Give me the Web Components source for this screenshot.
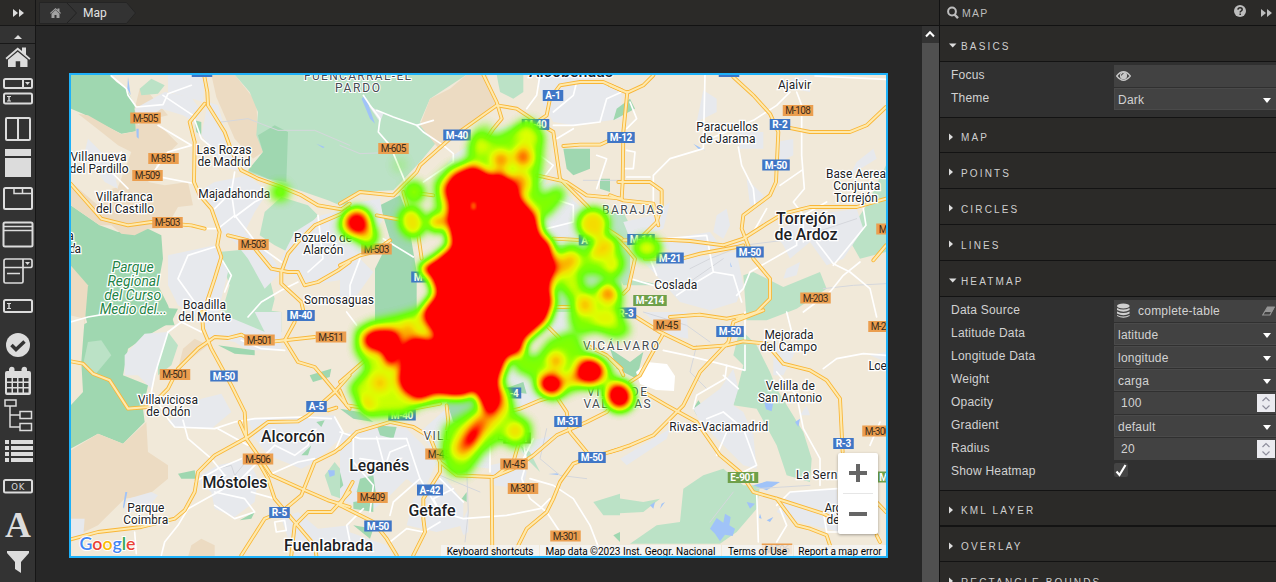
<!DOCTYPE html>
<html lang="en">
<head>
<meta charset="utf-8">
<title>Map editor</title>
<style>
html,body{margin:0;height:100%;overflow:hidden;background:#272727;font-family:"Liberation Sans",Arial,sans-serif}
</style>
</head>
<body>
<map-studio></map-studio>
<script>
class Base extends HTMLElement{
  constructor(){super();this.attachShadow({mode:'open'});}
  connectedCallback(){this.shadowRoot.innerHTML=this.view();}
}
const a=(el,n)=>el.getAttribute(n)||'';

/* ---------- shell ---------- */
customElements.define('map-studio',class extends Base{view(){return `
<style>
:host{display:grid;grid-template-columns:36px 903px 337px;width:1276px;height:582px;overflow:hidden;background:#272727}
main{display:grid;grid-template-rows:26px 1fr;min-height:0}
.work{display:grid;grid-template-columns:886px 17px;min-height:0}
.canvas{padding:47px 34px 0 33px;overflow:hidden}
</style>
<tool-rail></tool-rail>
<main><crumb-bar label="Map"></crumb-bar>
<div class="work"><div class="canvas"><heat-map></heat-map></div><scroll-track></scroll-track></div></main>
<property-panel>
 <property-section name="BASICS" open style="--h:36px;--b:56px">
  <property-row label="Focus" kind="eye"></property-row>
  <property-row label="Theme" kind="select" value="Dark"></property-row>
 </property-section>
 <property-section name="MAP" style="--h:35px"></property-section>
 <property-section name="POINTS"></property-section>
 <property-section name="CIRCLES"></property-section>
 <property-section name="LINES"></property-section>
 <property-section name="HEATMAP" open style="--b:194px">
  <property-row label="Data Source" kind="source" value="complete-table"></property-row>
  <property-row label="Latitude Data" kind="select" value="latitude"></property-row>
  <property-row label="Longitude Data" kind="select" value="longitude"></property-row>
  <property-row label="Weight" kind="select" value="carga"></property-row>
  <property-row label="Opacity" kind="number" value="100"></property-row>
  <property-row label="Gradient" kind="select" value="default"></property-row>
  <property-row label="Radius" kind="number" value="20"></property-row>
  <property-row label="Show Heatmap" kind="check"></property-row>
 </property-section>
 <property-section name="KML LAYER" style="--line:2px"></property-section>
 <property-section name="OVERLAY" style="--h:35px"></property-section>
 <property-section name="RECTANGLE BOUNDS"></property-section>
</property-panel>`}});

/* ---------- left rail; every icon is drawn on the rail's own grid ---------- */
const box='fill="none" stroke="#dcdcdc" stroke-width="2"';
const tools=[
 [44,70,'<path d="M5.5 58 17.7 47.5 22 51v-3.500h4V54.500l4.500 4-1.200 1.200-11.600-9.700L6.700 59.500zM8 59.700l9.700-8 9.800 8V67h-7.300v-5.800h-4.500V67H8z"/>'],
 [70,110,`<rect x="4" y="79" width="28" height="9" rx="1.500" ${box}/><path d="M23 79v9" ${box}/><path d="M25 82h5l-2.500 3z"/><rect x="4" y="93.500" width="28" height="10" rx="1.500" ${box}/><path d="M7 96h4v1H9.700v3.500H11v1H7v-1h1.300V97H7z"/>`],
 [110,145,`<rect x="6" y="118" width="24" height="22" rx="1" ${box}/><path d="M18 118v22" ${box}/>`],
 [145,181,'<path d="M5 149h26v7H5zM5 158h26v19H5z"/>'],
 [181,217,`<rect x="4" y="188" width="28" height="21" rx="1.500" ${box}/><path d="M14 188v5.500h18M22.500 188v5" ${box} style="stroke-width:1.500"/>`],
 [217,253,`<rect x="3.500" y="222.500" width="29" height="24" rx="1.500" ${box}/><path d="M4 226.500h28M4 230.500h28" ${box} style="stroke-width:1.500"/>`],
 [253,289,`<path d="M4 267V261q0-2 2-2h24q2 0 2 2v5q0 1.500-2 1.500H4v14q0 1.500 1.500 1.500h16q1.500 0 1.500-1.500V259M7 273.500h13" ${box} style="stroke-width:1.700"/><path d="M25 262h5l-2.500 3z"/>`],
 [289,325,`<rect x="4" y="300" width="28" height="12" rx="1.500" ${box}/><path d="M7 303h4v1H9.700v4H11v1H7v-1h1.300v-4H7z"/>`],
 [325,361,'<circle cx="18" cy="345" r="12"/><path d="m11.500 345 4.500 4.500 8.500-8" fill="none" stroke="#333" stroke-width="3.500"/>'],
 [361,397,'<path fill-rule="evenodd" d="M7 371h2v-2q1-3 4-2 1.500.5 1.500 2v2h7v-2q1-3 4-2 1.500.5 1.500 2v2h2q2 0 2 2v20q0 2-2 2H7q-2 0-2-2v-20q0-2 2-2zM7 378v3.500h4.500V378zm6 0v3.500h4V378zm5.500 0v3.500h4V378zm5.500 0v3.500h4.500V378zM7 383v4h4.500v-4zm6 0v4h4v-4zm5.500 0v4h4v-4zm5.500 0v4h4.500v-4zM7 388.500v4h4.500v-4zm6 0v4h4v-4zm5.500 0v4h4v-4zm5.500 0v4h4.500v-4z"/>'],
 [397,435,`<path d="M5 400h11v6H5zM20 411.500h11.500v7H20zM20 423.500h11.500v7H20zM10 406v21h10M10 415h10" ${box} style="stroke-width:1.500"/>`],
 [435,468,'<path d="M5 440h4v4H5zM11 440h22v4H11zM5 446h4v4H5zM11 446h22v4H11zM5 452h4v4H5zM11 452h22v4H11zM5 458h4v4H5zM11 458h22v4H11z"/>'],
 [468,504,`<rect x="4" y="480" width="28" height="12.500" rx="1.500" ${box}/><text x="18.300" y="489.700" text-anchor="middle" font-family="DejaVu Sans" font-size="8.500" letter-spacing="1">OK</text>`],
 [504,544,'<text x="18" y="537" text-anchor="middle" font-family="Liberation Serif" font-weight="bold" font-size="36" textLength="26" lengthAdjust="spacingAndGlyphs">A</text>'],
 [544,582,'<path d="M7 551h22v2l-8 9v11l-6-4v-7l-8-9z"/>']];
customElements.define('tool-rail',class extends Base{view(){return `
<style>
:host{display:flex;flex-direction:column;width:35px;height:582px;background:#333;border-right:1px solid #161616;box-sizing:content-box;overflow:hidden}
header,.up{display:grid;place-items:center;box-sizing:border-box;flex:none;border-bottom:1px solid #181818}
header{height:26px;background:#2b2a28}.up{height:18px;padding-top:4px}
svg{display:block;fill:#dcdcdc;flex:none}
</style>
<header><svg width="12" height="8"><path d="M1 0 6 4 1 8zM7 0l5 4-5 4z"/></svg></header>
<div class="up"><svg width="8" height="4"><path d="M0 4 4 0l4 4z"/></svg></div>
${tools.map(([t,b,s])=>`<svg width="36" height="${b-t}" viewBox="0 ${t} 36 ${b-t}">${s}</svg>`).join('')}`}});

customElements.define('crumb-bar',class extends Base{view(){return `
<style>
:host{display:flex;align-items:center;background:#2b2a28;border-bottom:1px solid #121212;height:25px;padding-left:3px}
.c{position:relative;width:98px;height:22px;display:flex;align-items:center}
.c>svg{position:absolute;left:0;top:0}
span{position:relative;margin:1px 0 0 44px;font:12px Roboto,sans-serif;color:#e4e4e4}
</style>
<div class="c"><svg width="98" height="22"><path d="M.5.500h87l9 10.500-9 10.500h-87z" fill="#333" stroke="#242424"/><path d="m28 1 9.500 10L28 21" fill="none" stroke="#222"/><path d="m11 11 5.500-5 2 1.800V6.500h2v3L22 11l-.7.700-4.800-4.300-4.800 4.300zM12.500 11.700l4-3.700 4 3.700V16h-3v-3h-2v3h-3z" fill="#a2a2a2"/></svg><span>${a(this,'label')}</span></div>`}});

customElements.define('scroll-track',class extends Base{view(){return `
<style>:host{display:flex;flex-direction:column;background:#505050}.b{height:17px;background:#333;display:grid;place-items:center}</style>
<div class="b"><svg width="10" height="8" style="margin:-2px 1px 0 0"><path d="M1 6.500 5 2.200l4 4.300" fill="none" stroke="#fff" stroke-width="2"/></svg></div>`}});

/* ---------- property panel ---------- */
customElements.define('property-panel',class extends Base{view(){return `
<style>
:host{display:flex;flex-direction:column;height:582px;overflow:hidden;border-left:1px solid #121212;background:#2b2a28;box-sizing:border-box}
header{height:26px;flex:none;box-sizing:border-box;border-bottom:1px solid #121212;display:flex;align-items:center;padding:0 4px 0 7px;color:#bdbdbd;font-size:10.500px;letter-spacing:1.300px}
header span{padding:1px 0 0 3px;flex:1}svg{display:block;fill:#bdbdbd}.q{margin:-3px 15px 0 0}
</style>
<header><svg width="12" height="13"><circle cx="5" cy="5.500" r="3.900" fill="none" stroke="#bdbdbd" stroke-width="2"/><path d="m7.500 8.500 3.500 3.600" stroke="#bdbdbd" stroke-width="2.400"/></svg><span>MAP</span>
<svg class="q" width="12" height="12"><circle cx="6" cy="6" r="6"/><path d="M3.900 4.700q.2-1.900 2.200-1.900 2.100 0 2.100 1.700 0 1.100-1.200 1.700-.8.400-.8 1.200M6.200 8.400v1.500" fill="none" stroke="#2b2a28" stroke-width="1.500"/></svg>
<svg width="11" height="8"><path d="M0 0 5 4 0 8zM6 0l5 4-5 4z"/></svg></header><slot></slot>`}});

customElements.define('property-section',class extends Base{view(){const o=this.hasAttribute('open');return `
<style>
:host{display:block;flex:none}
h3{margin:0;height:var(--h,36px);box-sizing:border-box;border-bottom:var(--line,1px) solid #131313;display:flex;align-items:center;padding:6px 0 0 9px;font:10px/1 "Liberation Sans",sans-serif;letter-spacing:2.150px;color:#cfcfcf;white-space:nowrap}
h3 svg{width:12px;height:8px;fill:#ddd;margin-top:-3px;flex:none}
.body{height:var(--b);box-sizing:border-box;border-bottom:1px solid #131313;background:#303030;padding-top:3px;display:${o?'block':'none'}}
</style>
<h3><svg>${o?'<path d="M0 2.500h7.500L3.700 6.500z"/>':'<path d="M0 .500 4 4 0 7.500z"/>'}</svg>${a(this,'name')}</h3><div class="body"><slot></slot></div>`}});

customElements.define('property-row',class extends Base{view(){
const k=a(this,'kind'),v=a(this,'value');
const f={
eye:`<svg width="15" height="10" style="margin-left:2px"><path d="M.700 5Q7.500-3.500 14.300 5 7.500 13.500.700 5z" fill="none" stroke="#c8c8c8" stroke-width="1.300"/><circle cx="7.500" cy="4.700" r="3.600" fill="#c8c8c8"/><path d="M5.500 4.500q0-2 2-2" stroke="#444" fill="none"/></svg>`,
select:`<span style="padding:2px 0 0 4px">${v}</span><svg width="8" height="5" style="margin:3px 5px 0 0"><path d="M0 0h8L4 5z" fill="#fff"/></svg>`,
source:`<svg width="14" height="15" style="margin:-2px 0 0 2px" fill="#d0d0d0"><ellipse cx="7.300" cy="3" rx="6.300" ry="2.600"/><path d="M1 5q6 3 12.600 0v2q-6 3.600-12.600 0zM1 8.500q6 3 12.600 0v2q-6 3.600-12.600 0zM1 12q6 3 12.600 0v1q-6 3.600-12.600 0z"/></svg><span style="padding-left:8px;letter-spacing:.23px">${v}</span><svg width="14" height="10" style="margin-right:0"><path d="M.700 9 5.500 1H12L8 9zM3 5.500h7" fill="none" stroke="#969696" stroke-width="1.200"/><path d="M5.500 1H13L10 6H3z" fill="#969696"/></svg>`,
number:`<span style="padding:0 0 1px 7px">${v}</span><svg width="18" height="18" style="margin-right:1px"><path d="M0 0h18v18H0z" fill="#ebebf0"/><path d="m5.500 7 3.500-3.500L12.500 7M5.500 11.500 9 15l3.500-3.500" fill="none" stroke="#8e8e9c" stroke-width="1.200"/></svg>`,
check:`<svg width="14" height="14"><rect width="14" height="14" rx="2" fill="#444"/><path d="M2.500 8.500 5.500 12 11.500 2" fill="none" stroke="#fff" stroke-width="2.200"/></svg>`}[k];
return `
<style>
:host{display:grid;grid-template-columns:174px 162px;height:23px;font-size:12px;letter-spacing:.21px;color:#d2d2d2}
label{padding:3px 0 0 11px;line-height:14px}
.f{height:22px;box-sizing:border-box;display:flex;align-items:center;background:${k=='check'?'none':'#424242'};border:${k=='select'?'solid #4a4a4a':'0 solid'};border-width:${k=='select'?'1px 0 1px 1px':0};${k=='check'?'height:17px;':''}}
.f span{flex:1;margin-left:${k=='select'?'-1px':'0'}}
svg{flex:none;display:block}
</style><label>${a(this,'label')}</label><div class="f">${f}</div>`}});

/* ---------- map: six terrain tiles, each on a grid three times finer than the screen ---------- */
const T={
A:{o:[68,72],
land:{
d:['8,8 125,8 145,30 175,50 200,100 205,178 160,185 100,155 45,125 8,110','8,400 95,460 150,480 240,470 280,490 285,560 270,640 300,700 320,760 60,760 8,590','380,145 400,150 400,190 385,180','175,300 185,300 188,350 170,370'],
t:['30,125 60,130 160,187 203,178 200,110 215,50 240,60 300,130 255,140 300,185 330,215 310,235 270,250 260,310 240,330 290,340 360,330 375,400 330,405 310,440 270,470 240,470 200,490 160,485 130,460 95,460 8,400 8,330 90,400 100,360 150,345 190,240 150,220 100,180','430,8 500,8 565,90 568,150 580,190 585,240 555,260 500,200 445,75','8,580 60,640 50,760 8,760'],
l:['500,8 840,8 840,410 780,385 650,340 540,300 585,240 565,190 570,120 545,60','590,420 640,375 720,400 750,430 690,500 660,540 620,520 575,490','450,540 560,530 600,600 620,680 600,760 450,760 485,640','215,50 250,20 290,40 270,65 220,70'],
u:['290,60 370,75 400,120 380,150 345,130 280,110 210,160 200,110','300,8 410,8 405,90 340,70 300,60','420,90 450,100 480,200 540,300 480,290 430,230 400,190','390,360 440,330 490,320 540,310 600,360 560,420 530,480 590,520 640,600 590,650 540,560 500,510 450,470 440,420','300,550 440,520 480,600 440,760 330,700 300,640','680,480 760,430 840,410 840,620 720,640 660,600 640,560','60,200 130,270 150,350 110,330 50,240']},
d2:['570,190 620,160 660,180 655,330 600,320 540,295 585,240'],
y:['410,95 365,150 380,210 378,330 395,370 430,410 455,480 448,520 460,555 440,620 420,680 402,740','408,8 418,60 420,100 470,180 490,235 520,295 570,320 640,345 700,370 750,400 820,412 845,395','8,335 100,440 180,460 250,450 370,460 410,470','480,490 540,505 610,590 660,600 690,600 710,640 750,630 810,595 845,570','845,408 820,425 740,460 690,510 660,545 640,600 640,635 700,690 710,735'],
w:['130,12 175,50 180,70 205,105 285,98 300,65 370,40','285,70 375,130 400,200 430,225','270,160 370,220 300,240 250,310 370,333','500,300 490,360 500,430 450,470 410,470','500,430 540,480 570,520 640,570','500,435 560,390 600,370','440,525 360,550 330,620 380,690','460,560 490,610 470,660','690,630 640,655 580,690 540,735','750,430 765,560 720,600','440,410 480,370 500,365','160,240 130,300 180,350'],
g:['460,150 540,140 630,175 740,175 845,220'],b:['205,170 212,170 212,200 206,195','180,15 188,70 178,50','745,215 770,225 765,228']},
B:{o:[340,72],
land:{l:['0,8 380,8 270,80 240,150 290,210 240,270 160,355 50,360 0,400','470,8 550,8 550,60 520,80 480,60','640,500 845,480 845,760 640,760'],
t:['270,80 330,50 380,8 440,8 470,90 400,150 300,235 240,160'],
d:['120,400 180,370 200,420 230,600 230,760 105,760 105,590 150,500','670,230 750,230 750,290 700,310 680,290','760,110 820,90 830,130 780,125','780,320 810,320 810,360 780,350'],
u:['590,8 720,8 845,50 845,140 700,160 640,150 610,100','540,360 640,330 760,440 720,520 640,520 600,440','0,400 120,380 130,440 60,560 100,600 30,700 0,680','340,250 460,170 560,150 620,330 560,400 280,330','85,100 130,125 120,150']},
y:['430,8 470,90 485,140 460,170 440,200','0,395 60,360 160,370 230,300 240,280 330,200 400,150 470,100 530,110 590,150 640,180 660,320 740,400 800,470 845,500','590,150 620,130 630,80 660,40 720,30 790,30 845,55','670,222 720,218 780,218 810,205','590,310 680,330 740,370 845,380','110,430 190,445','0,580 60,550 100,540 150,505','235,490 245,560','190,360 210,430','640,500 740,505','240,365 280,370','640,705 690,705'],
w:['70,70 90,100 120,140 115,180 150,220 200,340 200,360','110,115 160,135 230,160 280,145','230,160 250,180 310,220 340,245 340,270 250,330','600,8 590,70 560,110','640,160 700,160 780,150 800,80 845,60','710,30 700,70 640,120','130,500 220,555','60,560 30,640 30,700','770,250 800,260 770,350','700,170 650,200','600,250 640,280 600,330','620,470 700,450 700,400 640,380'],
g:['0,220 60,245 180,240','730,325 845,325'],b:['65,80 75,70 105,155 90,140']},
C:{o:[610,72],
land:{l:['400,610 430,600 520,645 630,600 650,650 560,710 470,745 410,745','710,490 770,400 828,280 828,540 750,560','0,420 40,420 70,480 60,520 60,620 160,640 40,640 0,560'],
d:['20,110 60,80 75,110 10,145','255,670 290,658 285,685 260,685'],
t:[],
u:['170,500 300,480 330,520 230,560 150,520','60,530 170,560 230,560 380,540 400,640 380,690 300,715 210,690 130,600','490,480 600,430 740,410 760,470 700,560 650,580 600,510 540,560 520,520','380,180 460,180 460,230 390,230','280,55 320,80 320,120 260,150','740,270 790,230 800,260 720,310','410,320 460,370 460,400 420,400','320,430 350,410 360,460 340,500 310,480','500,210 550,200 550,250 510,270','530,590 570,570 560,610 520,620','545,20 600,8 600,60 550,50','40,450 130,430 180,390 160,470 60,500']},
y:['52,60 40,180 38,330 35,380','0,40 52,62 100,40 130,10','370,15 430,70 480,125 505,180 498,330 480,370 440,400 400,430 395,470 430,560 480,620 480,680 440,720 380,740','500,160 600,180 720,180 770,160 828,105','25,330 120,330 155,355 155,400 140,450 100,490','0,370 40,385 130,395 145,460','40,505 160,503 240,507 340,520 400,500 470,455 520,425 600,405 740,405 828,380','105,560 160,560 215,560 270,545 380,525 400,520','0,480 50,530 75,560 55,650 40,665','828,520 790,565'],
w:['285,8 280,230 180,260 130,310 130,400','560,60 575,100 575,250 583,350 550,390 580,430','540,60 500,100 430,145 300,200','615,12 828,22','385,225 395,280 430,350 435,400','575,295 510,340','470,410 430,480','560,500 560,520 420,600 400,650 380,670','620,510 670,575 720,600 780,650 800,735','760,410 768,460 670,580','750,570 700,610 660,660 580,720','120,560 140,610','60,620 130,640 190,640','170,500 290,490 310,600 260,630 200,670','310,600 370,610 395,690','50,235 75,240 70,290 45,290','60,90 80,140 50,170','580,510 580,430 650,390','50,315 120,315'],
g:['240,590 300,560 400,520 560,500 740,440','640,650 730,640 828,635','210,650 340,560'],b:['250,215 285,235 265,230','360,570 366,585 362,584']},
D:{o:[68,312],
land:{d:['8,60 60,30 150,-20 330,-10 310,30 240,70 180,110 165,190 240,220 225,290 230,330 165,395 90,365 8,410'],
l:['60,90 100,85 130,130 80,190 45,160','270,110 300,60 330,100 310,160 270,190','500,30 560,-10 640,0 640,60 560,60','770,490 800,450 840,500 820,560 790,550'],
t:['8,415 90,365 165,395 235,330 240,420 300,460 300,500 240,550 170,560 90,640 8,680','345,110 380,80 420,100 330,170','370,700 400,680 440,700 440,735 360,735'],
u:['170,130 230,65 300,60 280,120 250,230 210,190 170,190','300,330 400,260 460,245 490,300 430,350 320,345','540,320 800,310 828,370 740,450 700,470 600,430 560,380','380,500 450,460 540,440 570,500 560,570 500,615 440,590 430,540','400,0 470,10 640,80 640,115 540,115 500,90 420,75','560,0 640,0 640,80 590,60','640,620 690,600 750,650 845,640 845,735 680,735','180,560 250,540 270,550 230,600 170,600','8,620 50,620 45,680 8,680']},
l2:['8,10 50,20 40,150 45,240 8,280'],d2:['725,190 790,170 785,195 735,210','330,485 380,475 385,500 340,500','515,625 560,600 550,620','450,100 560,115 560,130 500,125','700,430 730,400 720,430','745,330 770,325 760,345'],
y:['8,148 45,155 75,185 125,205 180,290 240,285 275,255 300,230 330,170 390,110 440,75 480,78 520,68 540,80','402,0 405,50 430,110 490,220 530,300 535,380 570,430 610,490 700,530 780,565 845,585','620,88 740,75','680,30 650,85 690,150 740,165 770,200 845,290','845,190 800,240 720,310 690,328 600,330 540,375 440,430 390,480 380,540 350,595 320,620 220,645 90,660 8,682','520,730 590,620 640,600 700,550 740,450 800,420 845,385','560,430 600,500 620,560 680,630 740,700 745,730','845,540 790,600 720,600 680,640 670,730','515,330 535,375','780,295 805,287'],
w:['300,60 260,190 250,240 300,320 320,345 440,350 500,330 560,320 700,315 790,320','345,325 360,380 430,440 470,490','450,350 540,400','450,540 360,590 330,640 290,690 280,730','450,540 520,500 580,440 620,400','440,540 530,560 560,600 500,620 440,580','600,490 690,450 740,440','800,315 825,360 800,420','620,400 680,430 720,400 730,370','200,660 205,725','300,60 340,30 400,60','520,85 580,110 650,115','550,540 620,560','8,30 60,15 120,5','380,510 450,470 520,440','620,630 650,625 655,655 625,660 620,630'],
g:['450,470 490,460 500,490 550,430'],b:['172,540 178,540 168,590 165,585','780,475 800,475 800,490 785,495']},
E:{o:[340,312],
land:{u:['0,370 80,345 200,350 250,400 290,450 250,540 200,500 140,560 90,600 0,560','220,560 310,490 370,570 370,640 290,660 200,640','450,460 540,440 560,480 550,530 460,520','0,650 140,700 160,735 0,735','480,130 600,120 620,240 540,290 480,250','520,390 600,380 680,360 560,440','620,0 720,0 740,60 660,100','240,360 330,280 450,320 450,470 300,450','360,640 385,590 385,660 370,670'],
l:['760,570 840,545 840,610 790,610','540,400 570,420 600,480 560,440'],
d:['0,290 60,300 100,330 40,320','110,340 170,345 160,380 120,370','40,570 100,560 100,600 40,590','60,500 100,490 110,560 50,540','320,270 420,260 480,300 380,340 340,330','0,480 10,520 0,530','40,640 100,650 90,680','480,235 550,210 560,245','365,560 380,540 380,570','820,670 840,660 840,690'],t:[]},
y:['0,410 50,360 150,330 220,345 270,375 300,450 350,490 460,495 520,470 580,430 650,370 740,330 800,300 845,240','0,580 100,630 140,680 170,730','38,510 10,560 0,580','320,280 325,330 310,440','300,450 300,480 250,560 250,620 255,660 220,730','455,500 457,730','520,730 560,650 620,600 640,560 660,510 700,455 740,440 845,410','640,240 680,300 690,360 740,420','500,300 540,290 600,265 650,250','540,380 520,450 470,490','0,235 20,280 120,295 220,290 300,275','620,40 660,80','740,100 800,130 845,170','0,210 80,140'],
w:['0,360 60,380 200,380','40,380 40,450 100,520 90,600','110,375 130,450 60,440','200,380 240,500 300,600 370,620 500,610 600,590 630,560','150,690 200,650 250,660 300,630','450,400 450,480','550,390 560,450 545,500 570,560 620,600 660,660 700,680','570,500 640,520 700,560 750,640 785,730','200,400 150,420 140,450','300,500 370,570','70,590 20,640 30,690','240,500 160,570 150,610','340,530 280,560 300,600','580,380 550,440','20,0 50,40'],
g:['380,470 385,600 375,690','620,350 600,440 660,490 740,500','300,490 420,540'],b:['625,486 655,484 655,489']},
F:{o:[610,312],
land:{l:['390,50 440,100 480,180 500,230 580,360 605,440 600,510 530,490 500,400 440,290 370,280 400,160 370,130','0,555 100,570 150,560 100,600 0,605','340,470 400,520 450,520 440,590 380,660 330,695 60,695 140,640 210,630 220,530 280,490'],
d:['0,110 60,150 100,120 80,200 20,170','250,290 265,265 290,300 260,310'],
u:['250,290 330,230 370,170 385,230 370,280 400,300 430,370 440,470 400,460 340,400 300,360 270,330','500,600 540,540 680,530 690,660 600,640 540,620','100,0 230,0 235,80 180,70','490,100 560,110 520,190 490,190','780,130 828,120 828,150','30,440 180,350 170,380 50,460','590,280 600,310 570,310'],t:[]},
y:['70,10 150,60 250,108 350,100 400,88 470,95 520,155 600,175 650,205 690,260 698,420','460,-5 370,30 355,90 270,180 220,280 190,310 130,370 60,400 0,420','0,140 30,170 40,190','180,15 270,8 350,20 400,10','160,65 120,135 90,190 60,210','110,245 170,280 260,330 330,430 390,480 430,540 500,560 640,605 690,630','500,560 560,640 600,650 650,670 660,700','828,600 790,560','800,670 810,690'],
w:['160,115 230,130 350,160','405,0 405,90','405,100 405,175 350,160 345,200 260,250 250,290','290,320 340,300','320,430 350,360','385,230 340,190','500,180 560,250 580,350 630,440 630,520','640,170 680,140 760,125 828,130','810,330 780,400','440,540 445,690','500,580 540,540 680,530','510,590 530,640 500,690','340,300 400,350 440,460 400,480','530,0 545,60','640,600 650,660 690,660'],
g:['100,0 230,40 300,90','260,100 240,180 290,230','440,530 600,520','300,630 370,540'],b:['300,650 320,618 340,632 345,605 362,615 358,640 375,650 368,672 345,668 330,688 315,665','430,520 470,508 510,510 470,535','410,570 435,575 420,590','450,240 462,245 470,262 490,270 485,298 468,292 462,268','555,330 570,320 565,345','120,580 135,570 130,590','155,575 165,570 150,590','450,605 455,620 447,618','470,625 490,615 480,630']}
};
const C={d:'#9fd7b0',t:'#ecdbc2',l:'#bbe2c6',u:'#e7e9ed'};
const tile=(k,fn)=>`<g transform="translate(${T[k].o}) scale(.33333)">${fn(T[k])}</g>`;
const each=fn=>Object.keys(T).map(k=>tile(k,fn)).join('');
const poly=(ps,c)=>(ps||[]).map(p=>`<polygon points="${p}" fill="${c}"/>`).join('');
const line=(ps,c,w)=>(ps||[]).map(p=>`<polyline points="${p}" stroke="${c}" stroke-width="${w}"/>`).join('');
const terrain=each(t=>Object.entries(t.land).map(([k,p])=>poly(p,C[k])).join('')+poly(t.d2,C.d)+poly(t.l2,'#f0e8d7')+poly(t.b,'#a0c3f8'))
+'<path d="m636 372 11-10 20 2 8 12-1 15-18-1-16-6z" fill="#fff"/>'
+`<g fill="none" stroke-linejoin="round" stroke-linecap="round">${each(t=>line(t.g,'#d5d7dc',3))}${each(t=>line(t.w,'#fff',5))}${each(t=>line(t.y,'#f9b637',11.5))}${each(t=>line(t.y,'#fee9ad',6.3))}</g>`;

/* text, centre x, baseline, width */
const towns=[['Villanueva',98.500,161,56],['del Pardillo',99,173,59],['Las Rozas',224,154,55],['de Madrid',224,166,53],['Majadahonda',234.300,198,72],['Villafranca',124.300,201,57],['del Castillo',125,213,58],['a',70.500,240,6],['da',75,253,12],['Pozuelo de',323,242,58],['Alarcón',323.300,254,40],['Somosaguas',339,304,70],['Boadilla',204.500,309,43],['del Monte',204.700,321,53],['Ajalvir',794.500,89,33],['Paracuellos',727.300,131,62],['de Jarama',727.500,143,56],['Base Aerea',856,178,60],['Conjunta',856.700,190,47],['Torrejón',856,202,44],['Coslada',675.800,289,43],['Mejorada',789,339,49],['del Campo',788.500,351,57],['Loeches',889,370,41],['Velilla de',790.300,390,49],['San Antonio',790,402,64],['Rivas-Vaciamadrid',718.800,431,99],['Villaviciosa',168,404,60],['de Odón',168.300,416,44],['Parque',145.800,512,37],['Coimbra',145.700,524,45],['La Serna',820,479,48],['Arganda',846,512,43],['del Rey',846,524,39]];
const cities=[['Alcobendas',571,77,84],['Torrejón',806,223.500,60],['de Ardoz',806,239.500,63],['Alcorcón',293,441.500,64],['Móstoles',235,487.500,65],['Leganés',379.300,470.500,60],['Getafe',432,515.500,47],['Fuenlabrada',328.500,550.500,89]];
const hoods=[['FUENCARRAL-EL',357.500,80,107],['PARDO',357.500,92,45],['BARAJAS',632.500,214,61],['VICÁLVARO',621,350,76],['VILLA DE',617,396,60],['VALLECAS',617,408,67],['VILLAVERDE',463.500,440,80]];
const park=[['Parque',132.800,272,42],['Regional',133.500,286,52],['del Curso',132.700,300,57],['Medio del...',133.300,314,67]];
const label=(arr,s)=>`<g ${s}>${arr.map(([t,x,y,w])=>`<text x="${x}" y="${y}" textLength="${w}">${t}</text>`).join('')}</g>`;
const sh=`M-505 145.5 118 o|M-851 163.5 158.5 o|M-509 147.5 175.5 o|M-503 167.5 222.5 o|M-503 253.5 244.5 o|M-503 376.5 249 o|M-605 393.5 148.5 o|M-40 457 135 b|M-40 535.5 124.5 b|A-1 553 95.5 b|M-12 621 137.5 b|M-108 798 110.5 o|R-2 780 124.5 b|M-50 776 165 b|M-14 641 239.5 b|A-2 589 240 b|M-21 670 258 b|M-50 750 252 b|M-214 650 300.5 g|M-203 815.5 298 o|M-45 667 325 o|R-3 626 313 b|M-50 730 331.5 b|M-206 883.5 326.5 o|M-100 891.5 229 o|M-501 259.5 340 o|M-511 331 337 o|M-501 175 374.5 o|M-50 224 376 b|A-5 316.5 406.5 b|M-40 301 315.5 b|M-506 258 459 o|R-5 279.5 512.5 b|M-409 372.5 497.5 o|A-42 430 490 b|M-50 378 526 b|M-45 439 454 o|M-45 514 464 o|M-301 523 488.5 o|M-301 565.5 536 o|M-31 568 421.5 b|M-50 592 457.5 b|A-4 511 393 b|R-3 843.5 443.5 b|E-901 743 477.5 g|M-300 877.5 431 o|M-208 892 477 g|A-6 202 71.5 b|R-2 729 71.5 b|M-506 777 549 o|M-30 425 277 b|M-40 402 415 b|M-31 517 438 g`.split('|').map(r=>{
 const [t,x,y,c]=r.split(' '),w=t.length==3?20.500:t=='M-214'?33.500:t=='A-42'?26:t.length==4?27.500:30.500;
 return `<rect x="${x-w/2}" y="${y-5.500}" width="${w}" height="11" fill="${{o:'#eb9e4f',b:'#3f76c6',g:'#6fa04a'}[c]}"/><text x="${x}" y="${+y+3.600}" textLength="${w-5}" fill="${c=='o'?'#3c2c1a':'#fff'}" font-weight="${c=='o'?400:700}">${t}</text>`}).join('');

/* intensity field: x, y, rx, ry, strength, rotation */
const spots=[[357,222,13,13,.85],[366,234,10,12,.45,-30],[351,226,12,12,.25],[414,192,10,10,.34],[412,222,12,15,.48,-15],[437,222,9,9,.6],[400,165,8,8,.05],[280,192,9,9,.26],
[483,140,10,16,.15,15],[501,160,9,9,.5],[523,157,9,10,.58],[528,133,13,14,.15],[520,183,9,11,.45],
[593,224,15,15,.5],[603,248,15,9,.32,-35],[613,265,10,10,.18],[566,264,15,9,.4,-35],[573,285,10,12,.12],[608,294,9,9,.52],[585,305,9,10,.38],[605,318,14,10,.18],[647,248,13,11,.4],
[556,361,8,8,.46],[551,384,12,11,.95],[590,371,14,13,.97],[619,396,13,14,.95,-30],[574,379,10,6,.4],
[515,431,9,9,.3],[472,437,6,12,.85,28],[480,424,7,9,.4,30],[462,447,9,9,.25],[366,404,8,8,.22],[380,383,8,8,.3],[430,396,16,7,.3],[408,331,8,8,.35],[404,352,5,12,.3]];
const blob=([x,y,rx,ry,o,r=0])=>`<ellipse cx="${x}" cy="${y}" rx="${rx}" ry="${ry}" opacity="${o}" transform="rotate(${r} ${x} ${y})"/>`;
const heat=`<g filter="url(#heat)"><g>
<g transform="translate(400 110) scale(.33333)" opacity=".3">
<polygon points="110,300 105,215 150,170 205,150 210,100 235,65 265,90 310,70 350,50 385,35 430,75 425,150 415,220 420,260 480,230 495,255 450,310 415,330 430,360 300,400"/>
<polygon points="440,440 520,400 555,430 600,370 650,390 672,460 645,510 590,490 545,490 545,530 580,540 625,505 665,550 660,610 690,665 650,685 590,660 535,675 512,640 512,570 490,535 440,540"/>
<polygon points="330,720 410,745 450,690 520,665 540,700 550,730 620,760 650,810 600,835 530,835 460,870 410,840 400,800 350,780"/>
<polygon points="290,800 345,910 390,940 392,990 345,1015 300,990 250,1025 200,1095 150,1092 125,1030 135,950 220,900"/></g>
<polygon opacity=".38" points="440,385 428,400 405,414 366,416 350,388 368,368 356,350 357,330 372,322 400,316 425,308 455,330"/>
<polygon opacity=".3" points="508,385 512,405 497,425 480,440 465,460 453,455 460,430 482,412"/>
<polygon stroke="#000" stroke-width="8" stroke-linejoin="round" points="447,189 455,177 473,169 483,174 488,179 500,176 512,185 517,199 533,217 537,235 548,245 552,269 546,285 550,302 544,319 521,339 520,349 505,355 496,379 497,402 490,412 484,402 475,387 467,385 467,393 453,394 437,390 418,396 406,389 402,380 408,345 417,341 436,345 440,336 427,318 427,310 440,294 433,275 425,269 437,262 455,247 450,219 452,205"/>
<polygon stroke="#000" stroke-width="7" stroke-linejoin="round" points="366,339 374,333 394,333 397,340 393,362 389,362 385,349 370,346"/>
${spots.map(blob).join('')}</g></g><ellipse cx="473.500" cy="206" rx="2.500" ry="3.500" fill="#ff6a00" opacity=".8" filter="url(#soft)"/>`;

customElements.define('heat-map',class extends Base{view(){return `
<style>
:host{display:block;position:relative;width:819px;height:485px;box-sizing:border-box;border:2px solid #1eb1f9;overflow:hidden;background:#f1e9d9}
.m{display:block;font-family:Roboto,sans-serif}
text{text-anchor:middle;paint-order:stroke}
.zoom{position:absolute;left:767px;top:378px;width:40px;height:81px;background:#fff;border-radius:2px;box-shadow:0 1px 3px #0005}
.legal{position:absolute;right:0;bottom:0;display:flex;height:11px;font:10px/11px Roboto,sans-serif;color:#000;gap:1px;white-space:nowrap}
.legal span{background:#f5f5f5cc;box-sizing:border-box;text-align:center;padding-top:1px}
.logo{position:absolute;left:7px;bottom:0}
</style>
<svg class="m" width="815" height="481" viewBox="71 75 815 481">
<defs><filter id="heat" filterUnits="userSpaceOnUse" x="60" y="60" width="840" height="510" color-interpolation-filters="sRGB">
<feGaussianBlur stdDeviation="4.800"/><feColorMatrix values="0 0 0 1 0 0 0 0 1 0 0 0 0 0 0 0 0 0 1 0"/>
<feComponentTransfer><feFuncR type="table" tableValues=".4 .4 .4 .5 .86 .96 .99 1 1 1 1"/><feFuncG type="table" tableValues="1 1 1 1 1 .87 .64 .35 0 0 0"/><feFuncA type="table" tableValues="0 .5 .93 1 1 1 1 1 1 1 1"/></feComponentTransfer></filter>
<filter id="soft"><feGaussianBlur stdDeviation="1.200"/></filter></defs>
${terrain}
${label(park,'font-size="14" font-style="italic" fill="#1f8446" stroke="#fff" stroke-width="2.5"')}
${label(hoods,'font-size="12" fill="#454b52" font-weight="400" stroke="#fff" stroke-width="2"')}
<g font-size="10">${sh}</g>
${label(towns,'font-size="12" fill="#202124" stroke="#fff" stroke-width="2.5"')}
${label(cities,'font-size="16" font-weight="500" fill="#202124" stroke="#fff" stroke-width="2.5"')}
${heat}</svg>
<svg class="logo" width="62" height="24"><text x="29.500" y="18" textLength="56" font-family="Lato,sans-serif" font-size="18" font-weight="600" stroke="#fff" stroke-width="2" lengthAdjust="spacingAndGlyphs"><tspan fill="#4285f4">G</tspan><tspan fill="#ea4335">o</tspan><tspan fill="#fbbc04">o</tspan><tspan fill="#4285f4">g</tspan><tspan fill="#34a853">l</tspan><tspan fill="#ea4335">e</tspan></text></svg>
<div class="zoom"><svg width="40" height="81"><path d="M11 20h18M20 11v18M11 61h18" stroke="#666" stroke-width="4"/><path d="M5 40.500h30" stroke="#e6e6e6"/></svg></div>
<div class="legal"><span style="width:98px">Keyboard shortcuts</span><span style="width:181px">Map data ©2023 Inst. Geogr. Nacional</span><span style="width:71px">Terms of Use</span><span style="width:92px">Report a map error</span></div>`}});
</script>
</body>
</html>
